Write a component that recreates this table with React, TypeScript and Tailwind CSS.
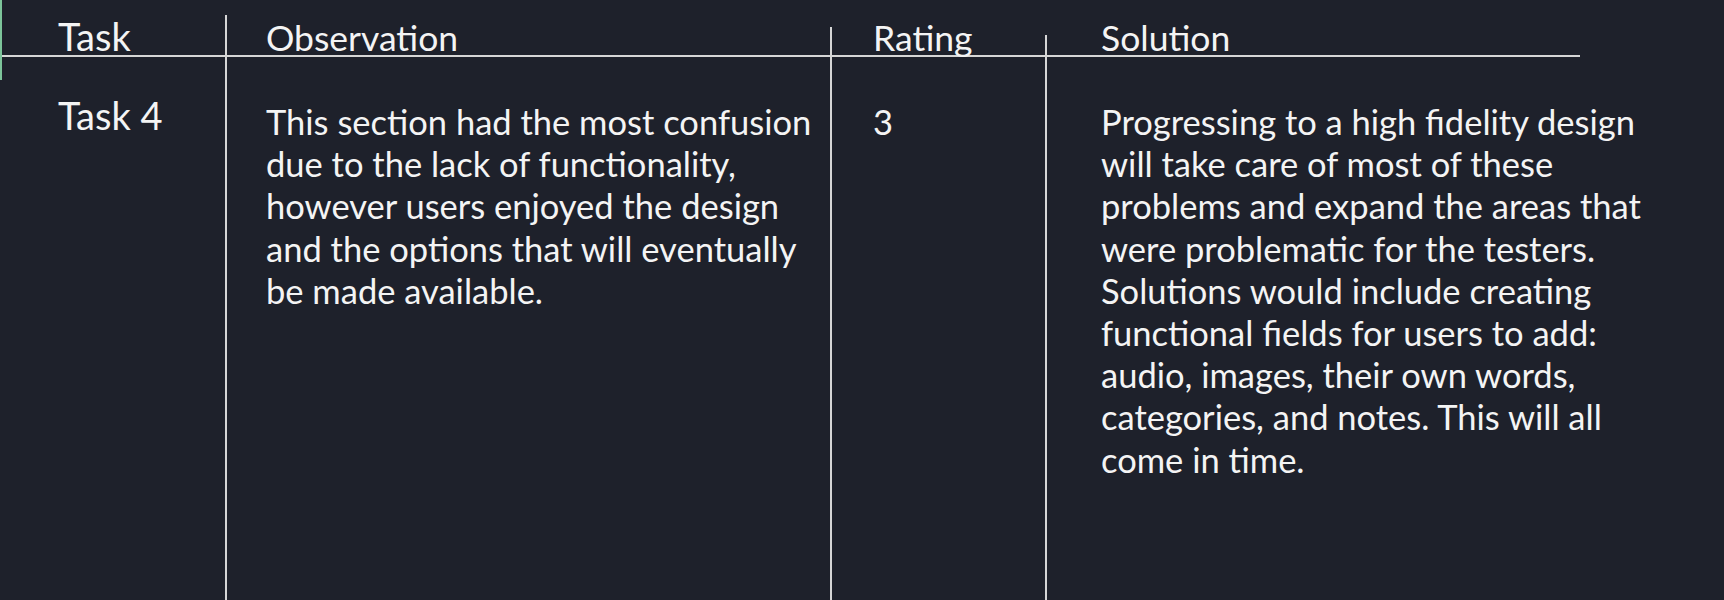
import React from "react";

const font = { fontFamily: "Lato, 'Noto Sans', sans-serif" };

export default function App() {
  return (
    <div
      className="flex h-[600px] w-full overflow-hidden bg-[#1e212b] text-[#f4f4f4]"
      style={font}
    >
      {/* selection marker */}
      <div className="h-[80px] w-[2px] shrink-0 bg-[#7cc49a]" />

      {/* Task column */}
      <div className="flex w-[223px] shrink-0 flex-col">
        <div className="flex h-[57px] flex-col justify-end border-b-2 border-[#d6d6d6] pl-[56px]">
          <span className="text-[38px] leading-[38px]">Task</span>
        </div>
        <div className="mt-[39px] pl-[56px] text-[38px] leading-[38px]">Task 4</div>
      </div>

      {/* Observation column */}
      <div className="mt-[15px] flex w-[605px] shrink-0 flex-col border-l-2 border-[#d6d6d6]">
        <div className="flex h-[42px] flex-col justify-end border-b-2 border-[#d6d6d6] pl-[39px]">
          <span className="text-[35.5px] leading-[35.5px]">Observation</span>
        </div>
        <p className="mt-[44px] w-[598px] pl-[39px] pr-[8px] text-[34.5px] leading-[42.2px]">
          This section had the most confusion due to the lack of functionality, however users
          enjoyed the design and the options that will eventually be made available.
        </p>
      </div>

      {/* Rating column */}
      <div className="mt-[27px] flex w-[215px] shrink-0 flex-col border-l-2 border-[#d6d6d6]">
        <div className="flex h-[30px] flex-col justify-end border-b-2 border-[#d6d6d6] pl-[41px]">
          <span className="text-[35.5px] leading-[35.5px]">Rating</span>
        </div>
        <p className="mt-[44px] pl-[41px] text-[34.5px] leading-[42.2px]">3</p>
      </div>

      {/* Solution column */}
      <div className="mt-[35px] flex flex-1 flex-col border-l-2 border-[#d6d6d6]">
        <div className="flex h-[22px] w-[533px] flex-col justify-end border-b-2 border-[#d6d6d6] pl-[54px]">
          <span className="text-[35.5px] leading-[35.5px]">Solution</span>
        </div>
        <p className="mt-[44px] w-[622px] pl-[54px] text-[34.5px] leading-[42.2px]">
          Progressing to a high fidelity design will take care of most of these problems and
          expand the areas that were problematic for the testers. Solutions would include creating
          functional fields for users to add: audio, images, their own words, categories, and
          notes. This will all come in time.
        </p>
      </div>
    </div>
  );
}
